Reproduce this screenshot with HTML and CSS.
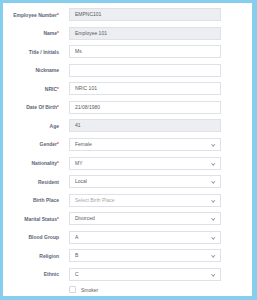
FILE: index.html
```html
<!DOCTYPE html>
<html>
<head>
    <title>Employee Details</title>
    <link rel="stylesheet" href="styles.css">
</head>
<body>
    <div class="panel">
        <form class="form-grid">
            <label class="label">Employee Number<span class="req">*</span></label>
            <div class="field readonly">EMPNC101</div>

            <label class="label">Name<span class="req">*</span></label>
            <div class="field readonly">Employee 101</div>

            <label class="label">Title / Initials</label>
            <div class="field">Ms</div>

            <label class="label">Nickname</label>
            <div class="field"></div>

            <label class="label">NRIC<span class="req">*</span></label>
            <div class="field">NRIC 101</div>

            <label class="label">Date Of Birth<span class="req">*</span></label>
            <div class="field">21/08/1980</div>

            <label class="label">Age</label>
            <div class="field readonly">41</div>

            <label class="label">Gender<span class="req">*</span></label>
            <div class="field select">Female</div>

            <label class="label">Nationality<span class="req">*</span></label>
            <div class="field select">MY</div>

            <label class="label">Resident</label>
            <div class="field select">Local</div>

            <label class="label">Birth Place</label>
            <div class="field select placeholder">Select Birth Place</div>

            <label class="label">Marital Status<span class="req">*</span></label>
            <div class="field select">Divorced</div>

            <label class="label">Blood Group</label>
            <div class="field select">A</div>

            <label class="label">Religion</label>
            <div class="field select">B</div>

            <label class="label">Ethnic</label>
            <div class="field select">C</div>

            <span></span>
            <div class="check-row"><span class="checkbox"></span>Smoker</div>
        </form>
    </div>
</body>
</html>
```

FILE: styles.css
```css
body {
    margin: 0;
    padding: 3px 5px 4px 3px;
    background-color: #86cdee;
    font-family: "Liberation Sans", Arial, sans-serif;
}
.panel {
    background-color: #fff;
    height: 288px;
    padding-top: 5px;
}
.form-grid {
    display: grid;
    grid-template-columns: 56px 152px;
    grid-auto-rows: 13px;
    column-gap: 10px;
    row-gap: 5.57px;
    align-items: center;
}
.label {
    text-align: right;
    font-size: 5px;
    font-weight: bold;
    color: #5b6579;
    white-space: nowrap;
}
.req {
    color: #e5484d;
}
.field {
    box-sizing: border-box;
    height: 13px;
    border: 1px solid #e0e1e8;
    padding: 0 5px;
    font-size: 5px;
    line-height: 11px;
    color: #5a5a5a;
    position: relative;
}
.readonly {
    background-color: #eceef2;
}
.placeholder {
    color: #a8a8a8;
}
.select::after {
    content: "";
    position: absolute;
    right: 6px;
    top: 4px;
    width: 1.5px;
    height: 1.5px;
    border-right: 1px solid #999;
    border-bottom: 1px solid #999;
    transform: rotate(45deg);
}
.check-row {
    display: flex;
    align-items: center;
    gap: 5px;
    font-size: 5px;
    color: #5a5a5a;
    align-self: start;
}
.checkbox {
    box-sizing: border-box;
    width: 7px;
    height: 7px;
    border: 1px solid #d6d7de;
    border-radius: 1px;
}
```
